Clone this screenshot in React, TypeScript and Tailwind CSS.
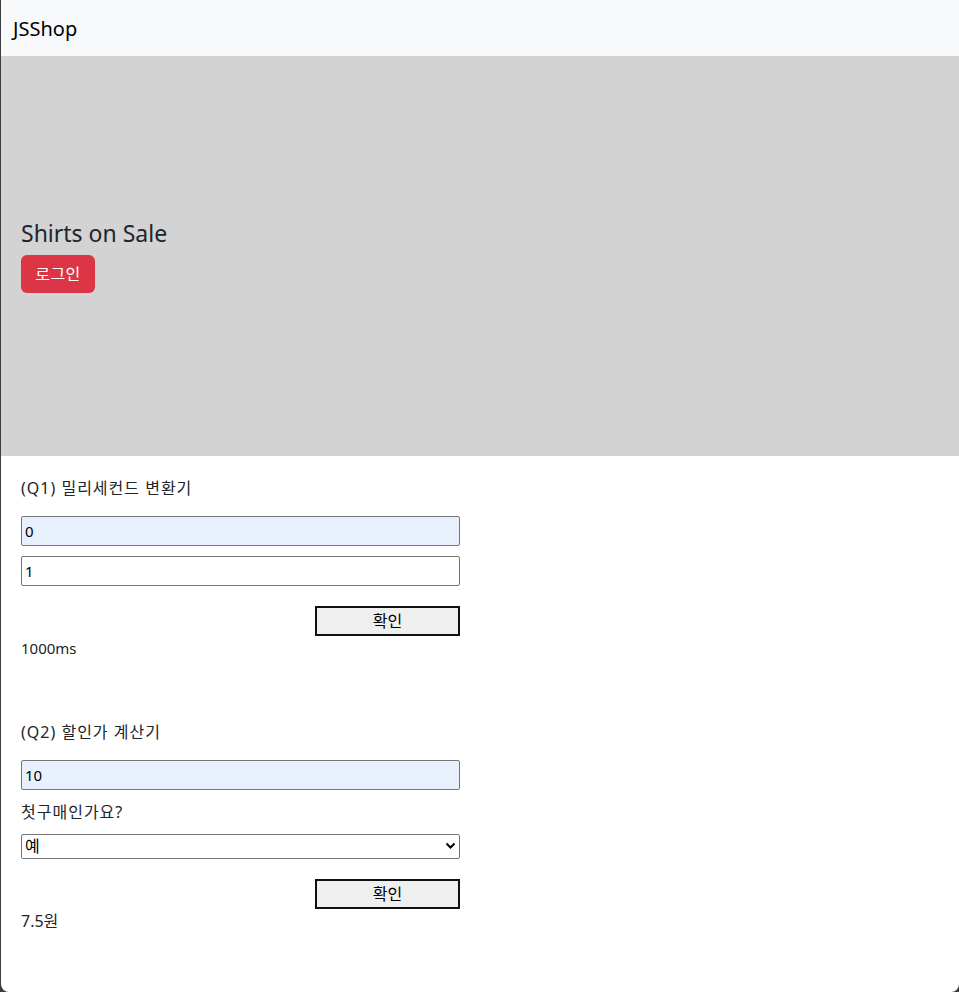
import React from "react";

const font = { fontFamily: '"Noto Sans", "Noto Sans CJK KR", sans-serif' };

export default function App() {
  return (
    <div className="h-[992px] bg-[#3c3c3c] overflow-hidden" style={font}>
      <div className="ml-[1px] h-[992px] bg-white rounded-b-[8px] overflow-hidden text-[#212529]">
        <nav className="h-[56px] bg-[#f8f9fa] flex items-center pl-[12px] pt-[2px]">
          <span className="text-[20px] leading-[30px] text-black">JSShop</span>
        </nav>
        <section className="h-[400px] bg-[#d3d3d3] flex flex-col justify-center items-start pl-[20px] pb-[4px]">
          <h1 className="text-[23px] leading-[36px] text-[#212529] mb-[4px]">Shirts on Sale</h1>
          <button className="h-[38px] w-[74px] rounded-[6px] bg-[#dc3545] text-white text-[16px] tracking-[0.5px]">
            로그인
          </button>
        </section>
        <div className="pl-[20px] pt-[20px] w-[460px]">
          <p className="text-[16px] leading-[24px] tracking-[1px]">(Q1) 밀리세컨드 변환기</p>
          <input
            readOnly
            value="0"
            className="mt-[16px] block w-[439px] h-[30px] border border-[#767676] rounded-[2px] bg-[#e8f0fe] px-[3px] text-[15px] text-black outline-none"
          />
          <input
            readOnly
            value="1"
            className="mt-[10px] block w-[439px] h-[30px] border border-[#767676] rounded-[2px] bg-white px-[3px] text-[15px] text-black outline-none"
          />
          <div className="mt-[20px] flex justify-end w-[439px]">
            <button className="w-[145px] h-[30px] border-2 border-[#111] bg-[#efefef] text-[16px] text-black">
              확인
            </button>
          </div>
          <p className="text-[15px] leading-[24px]">1000ms</p>

          <p className="mt-[60px] text-[16px] leading-[24px] tracking-[1px]">(Q2) 할인가 계산기</p>
          <input
            readOnly
            value="10"
            className="mt-[16px] block w-[439px] h-[30px] border border-[#767676] rounded-[2px] bg-[#e8f0fe] px-[3px] text-[15px] text-black outline-none"
          />
          <p className="mt-[10px] text-[16px] leading-[24px] tracking-[1px]">첫구매인가요?</p>
          <div className="mt-[10px] relative w-[439px] h-[25px]">
            <div className="w-full h-full border border-[#767676] rounded-[2px] bg-white pl-[3px] text-[16px] leading-[23px] text-black">
              예
            </div>
            <svg
              className="absolute right-[4px] top-[8px]"
              width="11"
              height="8"
              viewBox="0 0 11 8"
            >
              <path d="M1.5 1.5 L5.5 5.5 L9.5 1.5" stroke="#000" strokeWidth="2" fill="none" />
            </svg>
          </div>
          <div className="mt-[20px] flex justify-end w-[439px]">
            <button className="w-[145px] h-[30px] border-2 border-[#111] bg-[#efefef] text-[16px] text-black">
              확인
            </button>
          </div>
          <p className="text-[16px] leading-[24px]">7.5원</p>
        </div>
      </div>
    </div>
  );
}
